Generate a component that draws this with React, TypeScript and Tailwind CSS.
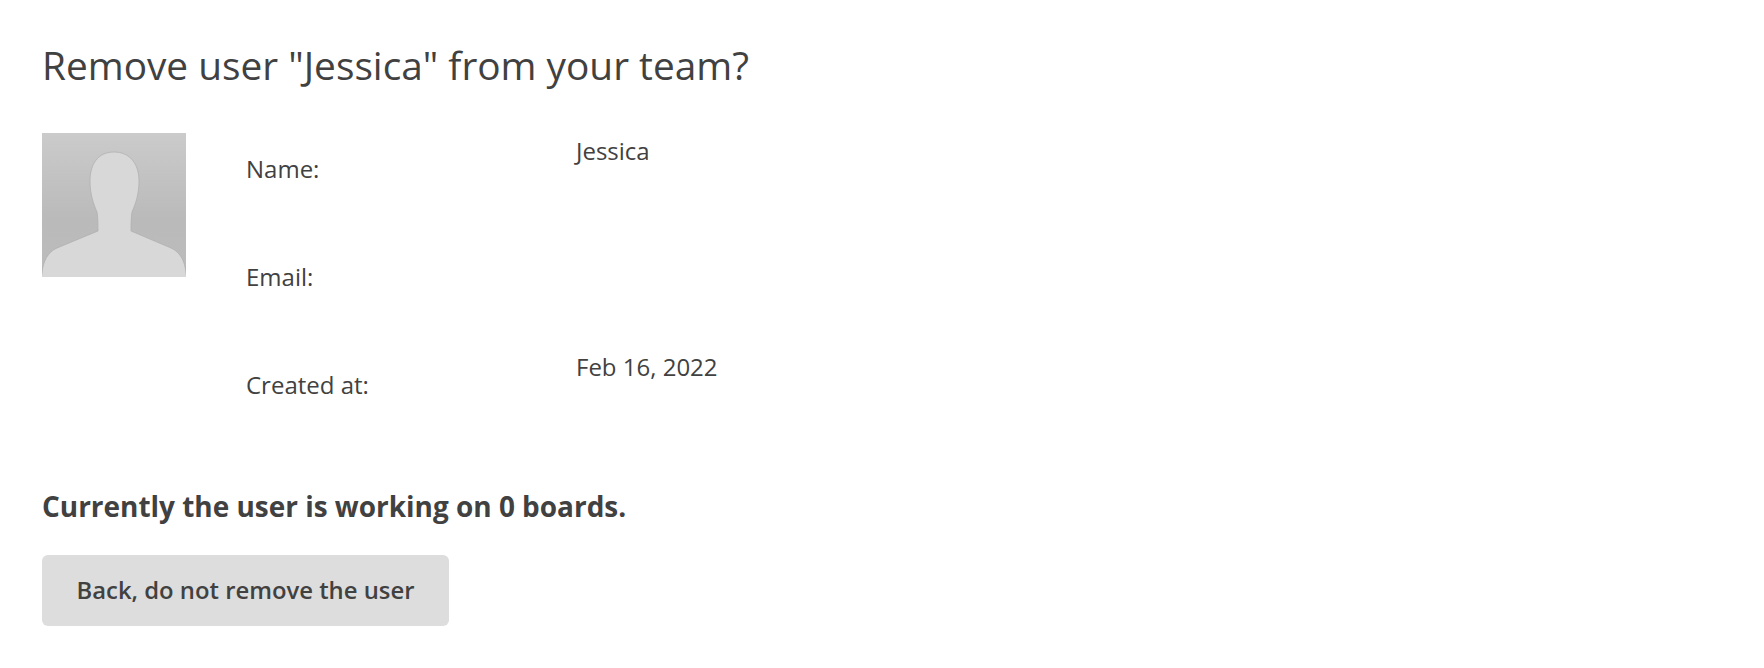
import React from 'react';

const Avatar = () => (
  <svg width="144" height="144" viewBox="0 0 144 144" className="shrink-0 block">
    <defs>
      <linearGradient id="bg" x1="0" y1="0" x2="0" y2="1">
        <stop offset="0" stopColor="#cbcbcb" />
        <stop offset="0.6" stopColor="#bababa" />
        <stop offset="1" stopColor="#bcbcbc" />
      </linearGradient>
    </defs>
    <rect width="144" height="144" fill="url(#bg)" />
    <path
      d="M72 19 C56 19 48 31 48 48 C48 62 52 72 55 79 C56 84 56 92 56 98 L15 115 C6 119 1 128 0 140 L-1 146 L145 146 L144 140 C143 128 138 119 129 115 L89 98 C89 92 89 84 90 79 C93 72 97 62 97 48 C97 31 88 19 72 19 Z"
      fill="#d8d8d8"
      stroke="#aeaeae"
      strokeWidth="0.7"
    />
  </svg>
);

const rows = [
  { label: 'Name:', value: 'Jessica' },
  { label: 'Email:', value: '' },
  { label: 'Created at:', value: 'Feb 16, 2022' },
];

export default function App() {
  return (
    <div className="min-h-screen bg-white pl-[42px] pt-[39px] text-[#414141] font-['Open_Sans',sans-serif]">
      <h1 className="text-[38.8px] leading-[52px] font-normal">Remove user "Jessica" from your team?</h1>

      <div className="flex mt-[42px]">
        <Avatar />
        <div className="ml-[60px] flex flex-col">
          {rows.map((row) => (
            <div key={row.label} className="flex h-[108px] text-[24px] leading-[36px]">
              <div className="w-[330px] pt-[18px]">{row.label}</div>
              <div>{row.value}</div>
            </div>
          ))}
        </div>
      </div>

      <p className="mt-[29px] text-[27.95px] leading-[40px] font-bold">Currently the user is working on 0 boards.</p>

      <button className="mt-[29px] h-[71px] w-[407px] rounded-[6px] bg-[#dddddd] pt-px text-[23.85px] font-semibold text-[#414141]">
        Back, do not remove the user
      </button>
    </div>
  );
}
